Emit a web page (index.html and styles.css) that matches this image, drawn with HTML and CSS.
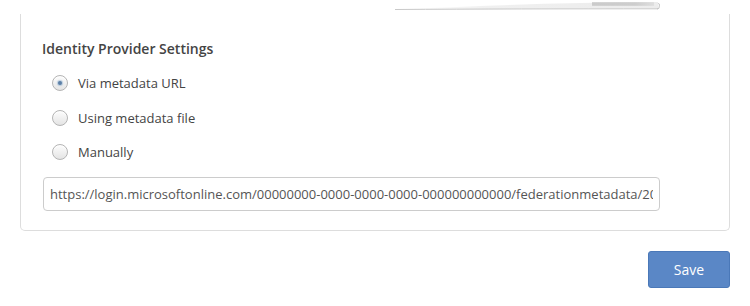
FILE: index.html
```html
<!DOCTYPE html>
<html lang="en">
<head>
<meta charset="utf-8">
<title>Identity Provider Settings</title>
<link rel="stylesheet" href="styles.css">
</head>
<body>
<div class="page">
  <svg class="curl" width="268" height="12" viewBox="0 0 268 12" aria-hidden="true">
    <defs>
      <linearGradient id="cg" x1="0" y1="0" x2="1" y2="0">
        <stop offset="0" stop-color="#ffffff"/>
        <stop offset="0.35" stop-color="#f0f0f0"/>
        <stop offset="1" stop-color="#ececec"/>
      </linearGradient>
      <linearGradient id="bar" x1="0" y1="0" x2="1" y2="0">
        <stop offset="0" stop-color="#cbcbcb"/>
        <stop offset="0.7" stop-color="#cdcdcd"/>
        <stop offset="1" stop-color="#dedede"/>
      </linearGradient>
    </defs>
    <path d="M0 9.2 C 80 6.5, 170 2, 263 2 L 263 8.6 C 170 8.6, 80 9, 0 9.6 Z" fill="url(#cg)"/>
    <path d="M0 9.5 C 80 9, 170 8.8, 263 8.8" fill="none" stroke="#c9c9c9" stroke-width="1"/>
    <rect x="197" y="2.2" width="62" height="3.6" fill="url(#bar)"/>
    <path d="M263 3.5 L 264.5 4.2 L 264 8.2 L 262 9" fill="none" stroke="#c4c4c4" stroke-width="1"/>
  </svg>

  <section class="card">
    <h3 class="card-title">Identity Provider Settings</h3>
    <div class="options">
      <label class="option"><input type="radio" name="idp" class="radio" checked><span>Via metadata URL</span></label>
      <label class="option"><input type="radio" name="idp" class="radio"><span>Using metadata file</span></label>
      <label class="option"><input type="radio" name="idp" class="radio"><span>Manually</span></label>
    </div>
    <input class="url-input" type="text" value="https://login.microsoftonline.com/00000000-0000-0000-0000-000000000000/federationmetadata/2007-06/federationmetadata.xml">
  </section>

  <div class="actions">
    <button class="btn-save" type="button">Save</button>
  </div>
</div>
</body>
</html>
```

FILE: styles.css
```css
* { box-sizing: border-box; }

html, body {
  margin: 0;
  padding: 0;
  background: #ffffff;
}

body {
  font-family: "Open Sans", "Liberation Sans", sans-serif;
  color: #444444;
}

.page {
  position: relative;
  width: 750px;
  height: 306px;
  padding: 14px 20px 0 20px;
}

.curl {
  position: absolute;
  top: 0;
  left: 395px;
}

.card {
  border: 1px solid #dddddd;
  border-top: none;
  border-radius: 0 0 5px 5px;
  padding: 25px 69px 19px 21px;
}

.card-title {
  margin: 0;
  font-size: 14px;
  line-height: 20px;
  font-weight: 600;
  color: #444444;
}

.options {
  display: flex;
  flex-direction: column;
  gap: 14.5px;
  margin-top: 14px;
  padding-left: 10px;
}

.option {
  display: flex;
  align-items: center;
  height: 20px;
  font-size: 13px;
  color: #444444;
  cursor: pointer;
}

.radio {
  appearance: none;
  -webkit-appearance: none;
  position: relative;
  width: 16px;
  height: 16px;
  margin: 0 10px 0 0;
  border: 1px solid #b4b4b4;
  border-radius: 50%;
  background: linear-gradient(#fdfdfd, #e4e4e4);
  box-shadow: inset 0 1px 1px rgba(255,255,255,0.9);
}

.radio:checked::after {
  content: "";
  position: absolute;
  left: 5px;
  top: 5px;
  width: 4px;
  height: 4px;
  border-radius: 50%;
  background: #5b7fa6;
  box-shadow: 0 0 1px 1px rgba(120,160,200,0.45);
}

.url-input {
  display: block;
  width: 617px;
  height: 34px;
  margin: 15px 0 0 1px;
  padding: 0 6px;
  border: 1px solid #cccccc;
  border-radius: 4px;
  font-family: "Open Sans", "Liberation Sans", sans-serif;
  font-size: 13px;
  color: #555555;
  background: #ffffff;
  outline: none;
}

.actions {
  display: flex;
  justify-content: flex-end;
  margin-top: 20px;
}

.btn-save {
  width: 82px;
  height: 37px;
  border: 1px solid #4a78b8;
  border-radius: 3px;
  background: #5a87c6;
  color: #ffffff;
  font-family: "Open Sans", "Liberation Sans", sans-serif;
  font-size: 14px;
  cursor: pointer;
}
```
